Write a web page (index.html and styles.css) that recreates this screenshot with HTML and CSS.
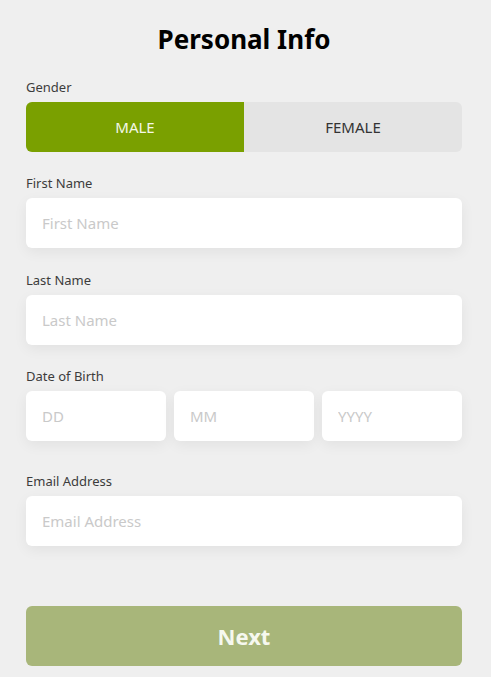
FILE: index.html
```html
<!DOCTYPE html>
<html lang="en">
<head>
  <meta charset="UTF-8">
  <meta name="viewport" content="width=device-width, initial-scale=1.0">
  <title>Personal Info</title>
  <link rel="stylesheet" href="styles.css">
</head>
<body>
  <main class="page">
    <h1 class="page-title">Personal Info</h1>

    <form class="info-form">
      <!-- Gender -->
      <div class="form-group">
        <label>Gender</label>
        <div class="segmented">
          <button type="button" class="segment active">MALE</button>
          <button type="button" class="segment">FEMALE</button>
        </div>
      </div>

      <div class="form-group first-group">
        <label for="firstName">First Name</label>
        <input type="text" id="firstName" placeholder="First Name">
      </div>

      <div class="form-group">
        <label for="lastName">Last Name</label>
        <input type="text" id="lastName" placeholder="Last Name">
      </div>

      <!-- Date of birth -->
      <div class="form-group dob-group">
        <label for="dobDay">Date of Birth</label>
        <div class="dob-row">
          <input type="text" id="dobDay" placeholder="DD">
          <input type="text" id="dobMonth" placeholder="MM">
          <input type="text" id="dobYear" placeholder="YYYY">
        </div>
      </div>

      <div class="form-group">
        <label for="email">Email Address</label>
        <input type="email" id="email" placeholder="Email Address">
      </div>

      <button type="submit" class="btn-next">Next</button>
    </form>
  </main>
</body>
</html>
```

FILE: styles.css
```css
:root {
  --page-bg: #efefef;
  --green: #7aa000;
  --green-muted: #a8b67a;
  --label: #3c3c3c;
  --placeholder: #c9c9c9;
  --segment-bg: #e4e4e4;
}

* {
  margin: 0;
  padding: 0;
  box-sizing: border-box;
}

body {
  background-color: var(--page-bg);
  font-family: 'Noto Sans', 'Open Sans', sans-serif;
  color: #222;
}

.page {
  width: 436px;
  margin-left: 26px;
  padding-top: 22px;
}

.page-title {
  font-size: 26px;
  font-weight: 700;
  line-height: 34px;
  text-align: center;
  color: #000;
  margin-bottom: 22px;
}

.form-group {
  margin-bottom: 22px;
}

.first-group {
  margin-bottom: 23px;
}

.dob-group {
  margin-bottom: 31px;
}

.form-group label {
  display: block;
  font-size: 13px;
  line-height: 18px;
  color: var(--label);
  margin-bottom: 6px;
}

.form-group input {
  display: block;
  width: 100%;
  height: 50px;
  padding: 0 16px;
  border: none;
  border-radius: 6px;
  background-color: white;
  font-family: inherit;
  font-size: 15px;
  color: #333;
  box-shadow: 0 4px 14px rgba(0, 0, 0, 0.06);
}

.form-group input::placeholder {
  color: var(--placeholder);
}

.form-group input:focus {
  outline: none;
}

/* Gender switch */
.segmented {
  display: flex;
  height: 50px;
  border-radius: 6px;
  overflow: hidden;
  background-color: var(--segment-bg);
}

.segment {
  flex: 1;
  border: none;
  background: none;
  font-family: inherit;
  font-size: 15px;
  color: #333;
  cursor: pointer;
}

.segment.active {
  background-color: var(--green);
  color: #f4f8e8;
}

.dob-row {
  display: flex;
  gap: 8px;
}

.dob-row input {
  flex: 1;
  min-width: 0;
}

.btn-next {
  display: block;
  width: 100%;
  height: 60px;
  margin-top: 60px;
  border: none;
  border-radius: 6px;
  background-color: var(--green-muted);
  color: #f6f8ef;
  font-family: inherit;
  font-size: 22px;
  font-weight: 700;
  cursor: pointer;
}
```
